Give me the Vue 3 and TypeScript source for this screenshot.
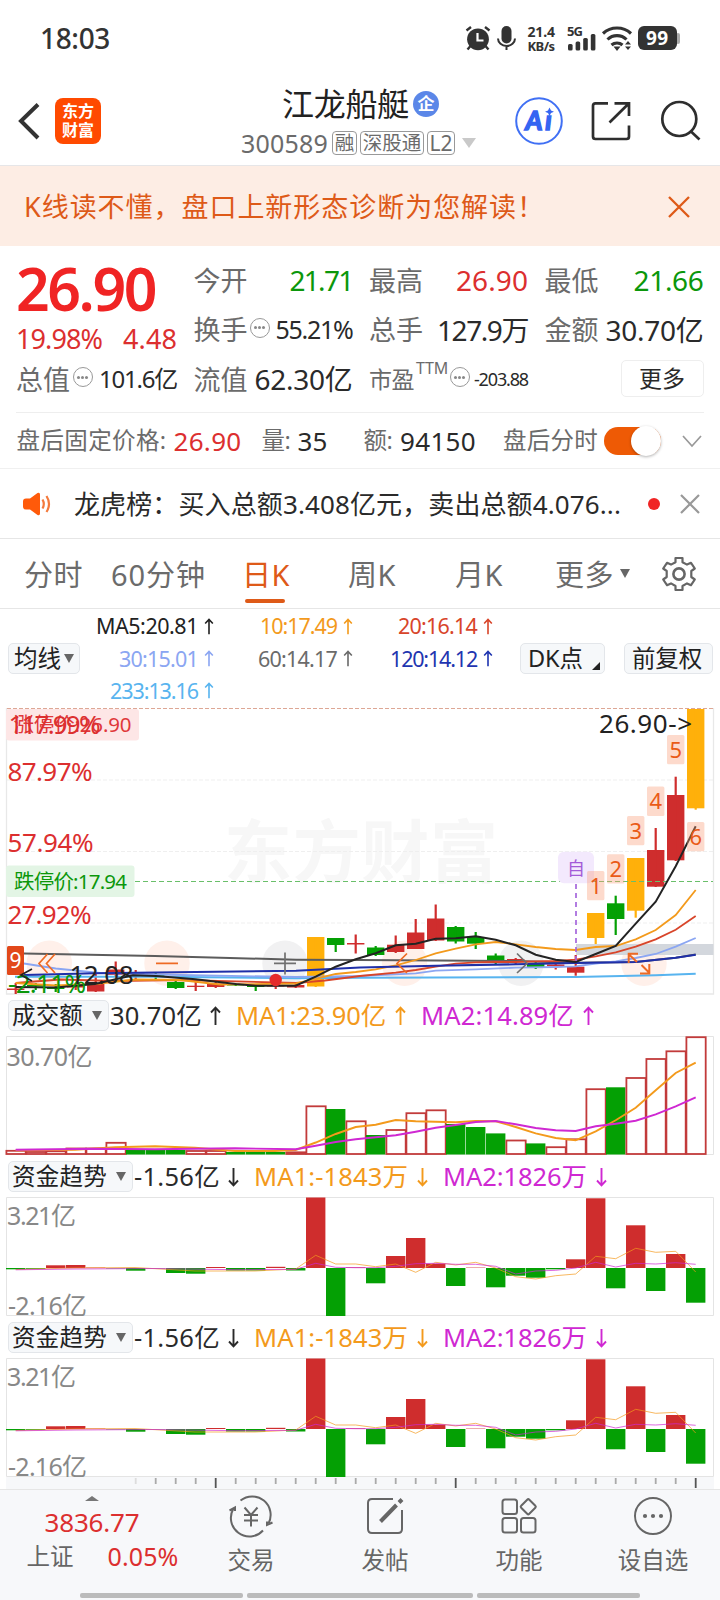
<script setup lang="ts">
import { h, type Directive, type FunctionalComponent } from 'vue'

// Spreads the glyphs of a label so that it takes exactly the given width.
const vFit: Directive<HTMLElement, number> = {
  mounted(el, { value }) {
    const n = (el.textContent ?? '').length
    const natural = el.getBoundingClientRect().width
    if (n) el.style.letterSpacing = `${((value - natural) / n).toFixed(3)}px`
  },
}

const Arrow: FunctionalComponent<{ down?: boolean }> = (p) =>
  h('svg', { class: 'arrow', width: 11, height: 20, viewBox: '0 0 11 20' }, [
    h('path', {
      d: p.down ? 'M5.5 1V18M1 13.5 5.5 18.3 10 13.5' : 'M5.5 19V2M1 6.5 5.5 1.7 10 6.5',
      fill: 'none', stroke: 'currentColor', 'stroke-width': 1.9,
    }),
  ])
Arrow.props = { down: Boolean }

const X0 = 15.7
const STEP = 20
const cx = (i: number) => X0 + STEP * i

type Kind = 'r' | 'g' | 'y'
// index, colour, body top, body bottom, wick top, wick bottom
type Candle = [number, Kind, number, number, number, number]
const candles: Candle[] = [
  [0, 'r', 988.5, 990, 983, 994], [1, 'g', 985, 986.5, 983, 990], [2, 'g', 987, 989, 984, 992], [3, 'r', 986, 987.5, 983, 990],
  [4, 'r', 984, 991.5, 973, 992], [5, 'r', 969.5, 975, 961.5, 977], [6, 'r', 973, 975, 970, 980], [7, 'g', 975, 977, 973, 979],
  [8, 'g', 982, 988, 981, 989], [9, 'r', 985.7, 987, 982, 991], [10, 'r', 983.5, 987, 982, 988], [11, 'g', 984, 985.5, 983, 986],
  [12, 'g', 985.5, 987, 985, 991], [13, 'r', 985, 986.5, 980, 989], [14, 'r', 985, 987.5, 984, 988], [15, 'y', 937, 986.5, 937, 987],
  [16, 'g', 938, 945, 938, 952], [17, 'r', 943, 944.5, 934.5, 953.5], [18, 'g', 947.5, 955, 946, 956], [19, 'r', 944.7, 952, 935.5, 953],
  [20, 'r', 932.5, 949, 919, 949], [21, 'r', 918.5, 940.5, 904.5, 941], [22, 'g', 927, 941.5, 926, 943.5], [23, 'g', 937, 943.7, 932, 949],
  [24, 'g', 955.5, 960.3, 953.5, 964], [25, 'r', 959, 960.5, 958, 964], [26, 'g', 963.3, 967, 961, 969], [27, 'r', 964.5, 966, 962, 969.5],
  [28, 'r', 966.7, 972.7, 955, 975.7], [29, 'y', 913, 938, 913, 944], [30, 'g', 903.3, 919, 895.7, 935], [31, 'y', 858, 910.7, 858, 917.7],
  [32, 'r', 850, 886.7, 828, 887], [33, 'r', 795, 860.3, 776.7, 861], [34, 'y', 709, 808.3, 709, 809.7],
]
const fill: Record<Kind, string> = { r: '#cf2d2d', g: '#04a004', y: '#ffb00a' }

// Points carry the x position in px and y in px.
const line = (pts: [number, number][]) => pts.map(([x, y]) => `${x},${y}`).join(' ')
const series = (from: number, ys: number[]): [number, number][] => ys.map((y, k) => [cx(from + k), y])

const averages = [
  { color: '#58b4ef', width: 1.9, pts: line([[15, 976.7], [155, 976.7], [296, 978.2], [360, 977.7], [575.7, 977], [655.7, 975.3], [695.7, 973.7]]) },
  { color: '#5c5c5c', width: 2, pts: line([[24, 953.5], [155, 956], [230, 958], [296, 959.7], [360, 960], [516, 961], [575.7, 962.7], [635.7, 962], [675.7, 957.7], [695.7, 954.6]]) },
  { color: '#8ba6f2', width: 1.8, pts: line([[24, 963.5], [55.7, 968.5], [100, 973], [155.7, 974.5], [296, 977], [360, 976], [415.7, 973.3], [435.7, 970.7], [475.7, 969.3], [515.7, 967.7], [555.7, 967], [575.7, 966.3], [595.7, 963.5], [615.7, 961.3], [635.7, 958], [655.7, 954], [675.7, 946.7], [695.7, 938]]) },
  { color: '#d8452a', width: 1.8, pts: line([[15.7, 983], [60, 979.5], [115, 981], [180, 980], [296, 983], [325, 980.5], [360, 976], [395.7, 972.7], [415.7, 970], [435.7, 966.7], [455.7, 963.7], [475.7, 962.3], [495.7, 962], [515.7, 962], [535.7, 961.3], [555.7, 961], [575.7, 959.7], [595.7, 956.3], [615.7, 952.3], [635.7, 946.7], [655.7, 939.3], [675.7, 929.7], [695.7, 916]]) },
  { color: '#f39a1c', width: 1.8, pts: line([[15.7, 983], [55, 985.5], [95, 984], [135, 979.5], [180, 980], [220, 984.5], [296, 983.5], [315, 979], [335.7, 974], [355.7, 972], [375.7, 969.3], [395.7, 965.3], [415.7, 960], [435.7, 953.3], [455.7, 948.7], [475.7, 944.3], [495.7, 942], [515.7, 944.3], [535.7, 947], [555.7, 949], [575.7, 950], [595.7, 947], [615.7, 946], [635.7, 939.3], [655.7, 930], [675.7, 915], [695.7, 890]]) },
  { color: '#1f2fa8', width: 2.1, pts: line([[24, 975], [95.7, 973.3], [155, 972.5], [296, 970.7], [360, 967.5], [435.7, 965.7], [515.7, 964.3], [575.7, 963], [635.7, 962], [675.7, 957.7], [695.7, 954.7]]) },
  { color: '#232323', width: 2, pts: line([[15.7, 987], [55.7, 987.5], [95, 984], [133, 975.3], [155.7, 976], [195.7, 979.3], [235.7, 984], [255.7, 985.7], [295.7, 985.7], [315.7, 976.7], [335.7, 966.7], [355.7, 959.3], [375.7, 953.3], [395.7, 945.3], [415.7, 943.7], [435.7, 938.7], [455.7, 938.3], [475.7, 936.3], [495.7, 939.7], [515.7, 945.3], [535.7, 954.7], [555.7, 959.7], [575.7, 962], [595.7, 954], [615.7, 946], [635.7, 923.7], [655.7, 901.7], [675.7, 866.3], [695.7, 826.3]]) },
]

const streaks = [
  { i: 29, n: 1, y: 871 }, { i: 30, n: 2, y: 854.2 }, { i: 31, n: 3, y: 816 },
  { i: 32, n: 4, y: 786.6 }, { i: 33, n: 5, y: 735 }, { i: 34, n: 6, y: 822 },
]
const scale = [
  { t: '117.99%', x: 8.5, y: 734, w: 92 }, { t: '87.97%', x: 7.5, y: 780.7, w: 85 },
  { t: '57.94%', x: 7.5, y: 852.3, w: 86 }, { t: '27.92%', x: 7.5, y: 923.7, w: 84 },
]

const volumeKinds = 'rrrrrrgggrrgggrrgrgrrrgggrgrrrgrrrr'
const volumeTops = [1150.8, 1152, 1151.3, 1148.5, 1148.5, 1142.8, 1150, 1150, 1150, 1151, 1151, 1152, 1152, 1152, 1152.3, 1106.3, 1109, 1121.3, 1135, 1130, 1113.2, 1110.3, 1124, 1127, 1133.4, 1140.5, 1143.4, 1147.2, 1139.3, 1089.2, 1087.3, 1078, 1059, 1051.3, 1037.2]
const volumeBars = volumeTops.map((y, i) => ({ i, y, up: volumeKinds[i] === 'r' }))
const volumeMa1 = line([[15.7, 1150.3], [75, 1149.7], [115, 1147.3], [155, 1146.3], [195, 1147.7], [235, 1151], [275, 1151], ...series(14, [1150, 1142.5, 1134, 1127, 1124.7, 1120, 1121.3, 1121.8, 1122.3, 1121, 1121.3, 1127, 1133.3, 1138, 1140.3, 1131.3, 1120.3, 1107.7, 1090.3, 1073, 1062.7])])
const volumeMa2 = line([[15.7, 1149.7], [95, 1148.7], [155, 1149.3], [235, 1148.3], ...series(14, [1149.3, 1145.7, 1142, 1139.3, 1137.3, 1135.3, 1131.7, 1127.7, 1125, 1122, 1121, 1124.3, 1128, 1130.3, 1131, 1126.3, 1123.7, 1120.7, 1114.3, 1106.3, 1097.3])])

// Height above zero in px; negative bars hang below.
const flows = [-1.3, -0.8, 2.7, 3, 0.4, -0.4, -2.7, -0.4, -5, -5.7, 1, -2.5, -2.5, 1.2, -2.5, 70.5, -48, 0.6, -15.3, 12, 30, 4.3, -18, 0.4, -19.3, -7.7, -9.7, -1.3, 8.7, 69.7, -20.3, 42.7, -23, 14, -34.7]
const flowMa1 = line([[15.7, 1269.5], [75, 1268], [135, 1267.5], [195, 1271], [255, 1271], ...series(14, [1269, 1255.3, 1264, 1264, 1266.7, 1264, 1272.3, 1262.3, 1265, 1262.3, 1268, 1276.7, 1279, 1275.7, 1274, 1256.3, 1258.7, 1248.3, 1252.3, 1251.3, 1272])])
const flowMa2 = line([[15.7, 1269.8], [75, 1269], [155, 1268.5], [235, 1269.7], ...series(14, [1269.3, 1263.3, 1267.3, 1267.7, 1267.7, 1266.3, 1263.7, 1263.3, 1264.3, 1264.3, 1266.3, 1274, 1271, 1270.3, 1268, 1262.3, 1267, 1263.3, 1264, 1262.7, 1264.3])])
const ticks = Array.from({ length: 29 }, (_, k) => k + 6)

const maCols = [
  [{ t: 'MA5:20.81', c: '#222222', w: 102 }, { t: '30:15.01', c: '#8ba6f2', w: 79 }, { t: '233:13.16', c: '#58b4ef', w: 88 }],
  [{ t: '10:17.49', c: '#f39a1c', w: 77 }, { t: '60:14.17', c: '#6b6b6b', w: 79 }],
  [{ t: '20:16.14', c: '#d8452a', w: 79 }, { t: '120:14.12', c: '#1f35b0', w: 87 }],
]
const nav = ['交易', '发帖', '功能', '设自选']
</script>

<template>
  <div class="page">
    <div class="status">
      <span v-fit="70" class="clock">18:03</span>
      <svg class="status-icons" width="226" height="36" viewBox="460 20 226 36">
        <g fill="#333">
          <circle cx="478" cy="39.3" r="10.9" />
          <path d="M466.500 30.500 471 27M489.500 30.500 485 27M470.500 46 467.500 49.500M485.500 46 488.500 49.500" stroke="#333" stroke-width="2.4" />
          <path d="M477.500 33V40.500H483.500" fill="none" stroke="#fff" stroke-width="2.2" />
          <rect x="501.500" y="26" width="10" height="17.500" rx="5" />
          <path d="M498 38.500a8.500 7.500 0 0 0 17 0M506.500 46V50" fill="none" stroke="#333" stroke-width="2" />
          <rect x="568" y="44" width="4.600" height="6.500" rx="1.500" /><rect x="575.600" y="41.500" width="4.600" height="9" rx="1.500" />
          <rect x="583.200" y="38" width="4.600" height="12.500" rx="1.500" /><rect x="590.800" y="34" width="4.600" height="16.500" rx="1.500" />
        </g>
        <g fill="none" stroke="#333" stroke-width="3.100">
          <path d="M603 33.500a20.500 20.500 0 0 1 28 0M607.500 39.500a13.500 13.500 0 0 1 19 0" />
          <path d="M611.500 45a8.500 8.500 0 0 1 11 0" />
        </g>
        <path d="M613.500 46.500h7L617 51zM625 44.500 628 41 631 44.500zM625 46.500h6L628 50z" fill="#333" />
        <rect x="676" y="33" width="4" height="11" rx="2" fill="#aaa" />
        <rect x="638" y="26" width="39" height="24" rx="6" fill="#333" />
        <g font-weight="700" fill="#333" font-size="14">
          <text x="527.500" y="37.300" textLength="27.500">21.4</text><text x="527.500" y="51" font-size="13" textLength="27.500">KB/s</text>
          <text x="567" y="36.300" font-size="13" textLength="16">5G</text>
          <text x="646" y="44.700" fill="#fff" font-size="19" textLength="22">99</text>
        </g>
      </svg>
    </div>

    <header class="head">
      <svg class="back" width="24" height="40" viewBox="0 0 24 40"><path d="M21 3.500 4 20 21 37" fill="none" stroke="#333" stroke-width="4" /></svg>
      <div class="logo"><span>东方</span><span>财富</span></div>
      <div class="title">
        <div class="name"><span v-fit="127">江龙船艇</span><i class="corp">企</i></div>
        <div class="code">
          <span v-fit="87">300589</span>
          <b class="tag t1">融</b><b class="tag t2">深股通</b><b class="tag t3">L2</b>
          <svg width="14" height="10" viewBox="0 0 14 10"><path d="M0 0H14L7 10z" fill="#c9c9c9" /></svg>
        </div>
      </div>
      <svg class="tools" width="192" height="52" viewBox="514 95 192 52">
        <circle cx="539" cy="121" r="22.800" fill="#fff" stroke="#4070f4" stroke-width="2" />
        <text x="525.500" y="129.500" fill="#3565f2" stroke="#3565f2" stroke-width="1.600" font-family="Lato" font-size="26" font-weight="700" font-style="italic" textLength="26">Aı</text>
        <path d="M549.500 107.500 551 110.500 554 111.800 551 113 549.500 116 548 113 545 111.800 548 110.500z" fill="#3565f2" />
        <g fill="none" stroke="#2e2e2e" stroke-width="2.700">
          <path d="M608 103.300H595.500a2.500 2.500 0 0 0-2.500 2.500V136.500a2.500 2.500 0 0 0 2.500 2.500H626.500a2.500 2.500 0 0 0 2.500-2.500V125.500M614.500 103.300H629V116M628.500 103.800 609.500 122.500" />
          <circle cx="679.300" cy="119" r="17" /><path d="M691 131.500 699.500 139.500" />
        </g>
      </svg>
    </header>

    <div class="banner">
      <span v-fit="521">K线读不懂，盘口上新形态诊断为您解读！</span>
      <svg width="24" height="24" viewBox="0 0 24 24"><path d="M2 2 22 22M22 2 2 22" stroke="#de5a18" stroke-width="2.300" /></svg>
    </div>

    <section class="quote">
      <div class="col c1">
        <div class="price"><span v-fit="139">26.90</span></div>
        <div class="chg red"><span v-fit="86">19.98%</span><span v-fit="54">4.48</span></div>
        <div class="cell"><label v-fit="54">总值</label><i class="dots" /><span v-fit="78" class="s24">101.6亿</span></div>
      </div>
      <div class="col">
        <div class="cell"><label v-fit="54">今开</label><span v-fit="63" class="green">21.71</span></div>
        <div class="cell"><label v-fit="54">换手</label><i class="dots" /><span v-fit="77" class="s25">55.21%</span></div>
        <div class="cell"><label v-fit="54">流值</label><span v-fit="98">62.30亿</span></div>
      </div>
      <div class="col">
        <div class="cell"><label v-fit="54">最高</label><span v-fit="72" class="red">26.90</span></div>
        <div class="cell"><label v-fit="54">总手</label><span v-fit="91">127.9万</span></div>
        <div class="cell pe"><label v-fit="45">市盈</label><sup v-fit="32">TTM</sup><i class="dots" /><span v-fit="54" class="s18">-203.88</span></div>
      </div>
      <div class="col">
        <div class="cell"><label v-fit="54">最低</label><span v-fit="70" class="green">21.66</span></div>
        <div class="cell"><label v-fit="54">金额</label><span v-fit="98">30.70亿</span></div>
        <div class="cell end"><button class="more">更多</button></div>
      </div>
    </section>

    <div class="after">
      <span v-fit="150" class="k">盘后固定价格:</span><span v-fit="68" class="v red m1">26.90</span>
      <span v-fit="29" class="k m2">量:</span><span v-fit="30" class="v m3">35</span>
      <span v-fit="29" class="k m4">额:</span><span v-fit="76" class="v m5">94150</span>
      <span v-fit="95" class="k m6">盘后分时</span>
      <i class="toggle" />
      <svg width="20" height="13" viewBox="0 0 20 13"><path d="M1 1 10 11 19 1" fill="none" stroke="#999" stroke-width="1.700" /></svg>
    </div>

    <div class="news">
      <svg width="30" height="26" viewBox="0 0 30 26">
        <path d="M4 7.500H8L15.500 2q2.500-1 2.500 1.500V22.500q0 2.500-2.500 1.500L8 18.500H4Q1 18.500 1 15.500V10.500Q1 7.500 4 7.500z" fill="#ff5a0a" />
        <path d="M20.500 8.500q2.600 4.500 0 9M24.500 5q5 8 0 16" fill="none" stroke="#f47a3c" stroke-width="2.200" />
      </svg>
      <span v-fit="547" class="msg">龙虎榜：买入总额3.408亿元，卖出总额4.076...</span>
      <i class="dot" />
      <svg width="20" height="20" viewBox="0 0 20 20"><path d="M1 1 19 19M19 1 1 19" stroke="#999" stroke-width="2.200" /></svg>
    </div>

    <nav class="tabs">
      <span v-fit="59" class="p1">分时</span><span v-fit="95" class="p2">60分钟</span><span v-fit="48" class="p3 on">日K</span>
      <span v-fit="48" class="p4">周K</span><span v-fit="48" class="p5">月K</span><span v-fit="59" class="p6">更多</span>
      <svg class="tri" width="10" height="9" viewBox="0 0 10 9"><path d="M0 0H10L5 9z" fill="#666" /></svg>
      <svg class="gear" width="36" height="36" viewBox="0 0 36 36" fill="none" stroke="#666" stroke-width="2.200" stroke-linejoin="round">
        <path d="M14.500 2H21.500V6.200L26 8.600 30 6.800 33.800 12.500 30.300 15V21L33.800 23.500 30 29.200 26 27.400 21.500 30V34H14.500V30L10 27.400 6 29.200 2.200 23.500 5.700 21V15L2.200 12.500 6 6.800 10 8.600 14.500 6.200z" /><circle cx="18" cy="18" r="5.600" stroke-width="2.600" />
      </svg>
    </nav>

    <div class="mas">
      <button class="chip b1"><span v-fit="47">均线</span><svg width="10" height="9" viewBox="0 0 10 9"><path d="M0 0H10L5 9z" fill="#666" /></svg></button>
      <div class="magrid">
        <div v-for="(col, c) in maCols" :key="c" class="macol">
          <div v-for="m in col" :key="m.t" class="ma" :style="{ color: m.c }"><span v-fit="m.w">{{ m.t }}</span><Arrow class="sm" /></div>
        </div>
      </div>
      <button class="chip b2"><span v-fit="55">DK点</span><svg class="corner" width="8" height="8" viewBox="0 0 8 8"><path d="M8 0V8H0z" fill="#222" /></svg></button>
      <button class="chip b3"><span v-fit="70">前复权</span></button>
    </div>

    <svg class="chart" width="720" height="287" viewBox="0 708 720 287">
      <g font-family="'Noto Sans CJK SC'" font-weight="700" font-size="68" fill="#f7f7f7"><text x="224" y="877" textLength="274">东方财富</text></g>
      <path d="M7 780H713M7 851.500H713M7 923H713" fill="none" stroke="#efefef" stroke-dasharray="4 2" />
      <path d="M6.500 708V994H713.500V708" fill="none" stroke="#e8e8e8" stroke-width="1.300" />
      <path d="M7 708.500H713" stroke="#dda795" stroke-dasharray="4 2" />
      <g fill="#fff0ea"><circle cx="49.300" cy="963.300" r="22.700" /><circle cx="167" cy="963.300" r="22.700" /><circle cx="404.500" cy="963.300" r="22.700" /><circle cx="644" cy="963.300" r="22.700" /></g>
      <g fill="#f1f1f2"><circle cx="285" cy="963.300" r="22.700" /><circle cx="521" cy="963.300" r="22.700" /></g>
      <rect x="576" y="944" width="137.500" height="11" fill="#d3d7dd" />
      <g v-for="[i, k, t, b, wt, wb] in candles" :key="i" :fill="fill[k]">
        <rect :x="cx(i) - 8.7" :y="t" width="17.400" :height="b - t" />
        <rect :x="cx(i) - 1.1" :y="wt" width="2.200" :height="wb - wt" />
      </g>
      <rect x="6" y="709" width="133" height="31.500" rx="3" fill="#fde6e6" />
      <text x="13.500" y="732" fill="#e0383a" font-size="20.500" textLength="118">涨停价:26.90</text>
      <path d="M135 881.500H713" stroke="#6abf6a" stroke-width="1.100" stroke-dasharray="5 3" />
      <rect x="6" y="865.500" width="128.500" height="31.500" rx="3" fill="#e3f5e5" />
      <text x="14" y="889" fill="#0b970b" font-size="20.500" textLength="113">跌停价:17.94</text>
      <g fill="#dc2f2f" font-size="26"><text v-for="s in scale" :key="s.t" :x="s.x" :y="s.y" :textLength="s.w">{{ s.t }}</text></g>
      <polyline v-for="a in averages" :key="a.color" :points="a.pts" fill="none" :stroke="a.color" :stroke-width="a.width" />
      <text x="8" y="993.300" fill="#0b970b" font-size="26" textLength="78">-2.11%</text>
      <g fill="none" stroke="#ee6a24" stroke-width="1.700">
        <path d="M47.500 954 39 963.500 47.500 973M55 954 46.500 963.500 55 973M156 963.300H178M407 953.500 397 963.500 407 973" />
        <path d="M628.700 963V953.700H638M629 954.500 637 962M641.500 965 649.500 973M649.300 964V973.500H640" stroke-width="2" />
      </g>
      <path d="M274 963.300H296M285 952.500V974.500M517 953.500 527 963.500 517 973" fill="none" stroke="#707070" stroke-width="1.700" />
      <circle cx="275.700" cy="980" r="6.200" fill="#e52b2b" />
      <rect x="7" y="946" width="17" height="29" rx="1.500" fill="#e2481a" />
      <text x="9.500" y="967.500" fill="#fff" font-size="21">9</text>
      <path d="M32 969 21 975 32 981" fill="none" stroke="#222" stroke-width="1.700" />
      <text x="69.500" y="983.500" fill="#222" font-size="26" textLength="64">12.08</text>
      <path d="M576 884V962" stroke="#a566dc" stroke-width="1.700" stroke-dasharray="5 4" />
      <rect x="558" y="851.700" width="36" height="31.500" rx="6" fill="#f3e9fd" />
      <text x="576" y="874.500" fill="#a35bd8" font-size="18" text-anchor="middle">自</text>
      <g v-for="s in streaks" :key="s.i" text-anchor="middle">
        <rect :x="cx(s.i) - 8.7" :y="s.y" width="17.400" height="29.300" rx="1.500" fill="#fb9e78" fill-opacity=".38" />
        <text :x="cx(s.i)" :y="s.y + 22.500" fill="#ea5a17" font-size="22">{{ s.n }}</text>
      </g>
      <text x="599" y="733.300" fill="#222" font-size="26" textLength="93">26.90-&gt;</text>
    </svg>

    <div class="ind">
      <button class="chip"><span v-fit="71">成交额</span><svg width="10" height="9" viewBox="0 0 10 9"><path d="M0 0H10L5 9z" fill="#666" /></svg></button>
      <span v-fit="92">30.70亿</span><Arrow class="a1" />
      <span v-fit="150" class="or">MA1:23.90亿</span><Arrow class="or a2" />
      <span v-fit="153" class="pu">MA2:14.89亿</span><Arrow class="pu a3" />
    </div>
    <svg class="chart" width="720" height="119" viewBox="0 1036 720 119">
      <path d="M6.500 1154.500V1036.500H713.500V1154.500z" fill="#fff" stroke="#e4e4e4" />
      <g v-for="b in volumeBars" :key="b.i">
        <rect v-if="b.up" :x="cx(b.i) - 9.300" :y="b.y" width="19.300" :height="1154 - b.y" fill="#fff" stroke="#c23b3b" stroke-width="1.800" />
        <rect v-else :x="cx(b.i) - 9.700" :y="b.y" width="19.400" :height="1154.500 - b.y" fill="#04a004" />
      </g>
      <polyline :points="volumeMa1" fill="none" stroke="#f39a1c" stroke-width="1.900" />
      <polyline :points="volumeMa2" fill="none" stroke="#cf28d2" stroke-width="1.900" />
      <text x="6.500" y="1066" fill="#888" font-size="25" textLength="86">30.70亿</text>
    </svg>

    <template v-for="p in 2" :key="p">
      <div class="ind flow">
        <button class="chip"><span v-fit="95">资金趋势</span><svg width="10" height="9" viewBox="0 0 10 9"><path d="M0 0H10L5 9z" fill="#666" /></svg></button>
        <span v-fit="86">-1.56亿</span><Arrow down class="f1" />
        <span v-fit="154" class="or">MA1:-1843万</span><Arrow down class="or f2" />
        <span v-fit="144" class="pu">MA2:1826万</span><Arrow down class="pu f3" />
      </div>
      <svg class="chart" width="720" height="119" viewBox="0 1197 720 119">
        <path d="M6.500 1315.500V1197.500H713.500V1315.500z" fill="#fff" stroke="#e4e4e4" />
        <rect v-for="(f, i) in flows" :key="i" :x="cx(i) - 9.700" :y="f > 0 ? 1268 - f : 1268" width="19.400" :height="Math.abs(f)" :fill="f > 0 ? '#cf2d2d' : '#04a004'" />
        <polyline :points="flowMa1" fill="none" stroke="#f39a1c" stroke-width=".7" />
        <polyline :points="flowMa2" fill="none" stroke="#cf28d2" stroke-width=".7" />
        <text x="7" y="1224.700" fill="#888" font-size="25" textLength="69">3.21亿</text>
        <text x="8" y="1315" fill="#888" font-size="25" textLength="79">-2.16亿</text>
      </svg>
    </template>
    <svg class="chart" width="720" height="12" viewBox="0 1477 720 12">
      <rect x="6" y="1477" width="708" height="12" fill="#f7f8fa" />
      <rect v-for="i in ticks" :key="i" :x="cx(i) - 0.900" y="1478" :width="1.800" :height="i % 12 === 10 ? 10 : 6" :fill="i % 12 === 10 ? '#555' : i === 6 ? '#ddd' : '#aaa'" />
    </svg>

    <footer class="bottom">
      <div class="index">
        <svg width="14" height="5" viewBox="0 0 14 5"><path d="M7 0 14 5H0z" fill="#777" /></svg>
        <span v-fit="95" class="red i1">3836.77</span>
        <div class="i2"><span v-fit="47">上证</span><span v-fit="71" class="red s25">0.05%</span></div>
      </div>
      <div v-for="(n, i) in nav" :key="n" class="item">
        <svg width="44" height="44" viewBox="-22 -22 44 44" fill="none" stroke="#666" stroke-width="2">
          <g v-if="i === 0">
            <path d="M-10.500-15.500A18.500 18.500 0 0 1 17.500 7.500M16 5.500V9L21.500 6.500M12 14.500A18.500 18.500 0 0 1-17.500-7.500M-21.500-5.500-16-8.500V-5" />
            <path d="M-6.500-8.500 0-1 6.500-8.500M-7-1H7M-7 4.500H7M0-1V10.500" />
          </g>
          <g v-else-if="i === 1"><path d="M8-17H-13Q-17-17-17-13V13Q-17 17-13 17H13Q17 17 17 13V-6" /><path d="M-4.500 5.500 11.500-11M14-13.500 17-16.500" stroke-width="4" /></g>
          <g v-else-if="i === 2">
            <rect x="-16.500" y="-16.500" width="14.500" height="14.500" rx="2.500" /><rect x="-16.500" y="2" width="14.500" height="14.500" rx="2.500" /><rect x="2" y="2" width="14.500" height="14.500" rx="2.500" />
            <rect x="3.500" y="-15" width="11.500" height="11.500" rx="1.500" transform="rotate(45 9.250 -9.250)" />
          </g>
          <g v-else><circle r="18" /><g fill="#666" stroke="none"><circle cx="-8" r="2.100" /><circle r="2.100" /><circle cx="8" r="2.100" /></g></g>
        </svg>
        <span v-fit="n.length * 23.500">{{ n }}</span>
      </div>
      <div class="home"><i /><i class="wide" /><i /></div>
    </footer>
  </div>
</template>

<style>
body { margin: 0; background: #fff; }
</style>

<style scoped>
.page { width: 720px; height: 1600px; overflow: hidden; background: #fff; color: #2a2a2a; font-family: "Noto Sans", "Noto Sans CJK SC", sans-serif; line-height: 1; }
.page * { box-sizing: border-box; }
span, label, sup { white-space: nowrap; flex: none; display: inline-block; }
i, b { font-style: normal; }
svg { display: block; flex: none; }
button { border: 0; padding: 0; font: inherit; color: inherit; }
.red { color: #dc2f2f; }
.green { color: #0b970b; }

.status { height: 76px; display: flex; padding: 20px 34px 0 40px; justify-content: space-between; }
.clock { font-size: 28px; font-weight: 500; line-height: 37px; color: #333; }

.head { height: 89px; display: flex; align-items: flex-start; padding: 0 14px 0 17px; }
.back { margin-top: 25px; }
.logo { margin: 22px 0 0 14px; width: 46px; height: 46px; border-radius: 8px; background: #ff4a00; color: #fff; font: 700 16px/19px "Noto Sans CJK SC"; display: flex; flex-direction: column; align-items: center; justify-content: center; padding-bottom: 2px; }
.title { margin: 9px 0 0 140px; width: 273px; }
.name { display: flex; align-items: center; height: 38px; padding-left: 41px; font-size: 32px; color: #222; }
.corp { width: 26px; height: 26px; margin-left: 4px; border-radius: 50%; background: #5b87e8; color: #fff; font-size: 17px; font-weight: 700; line-height: 25px; text-align: center; }
.code { display: flex; align-items: center; height: 40px; font-size: 25px; color: #6b6b6b; }
.tag { height: 24px; margin-right: 3px; border: 1px solid #999; border-radius: 4px; font-size: 19.500px; font-weight: 400; line-height: 22px; text-align: center; }
.t1 { width: 25px; margin-left: 4px; }
.t2 { width: 64px; }
.t3 { width: 28px; font-size: 21px; margin-right: 7px; }
.tools { margin-top: 19px; }

.banner { height: 81px; border-top: 1px solid #e6e6e8; background: #fdede4; color: #de5a18; font-size: 27px; display: flex; align-items: center; justify-content: space-between; padding: 1px 29px 0 24px; }

.quote { height: 166px; display: grid; grid-template-columns: 161px 159px 159px 159px; column-gap: 16.500px; padding: 9.500px 15px 0 16px; }
.col { display: flex; flex-direction: column; }
.cell { height: 49.500px; display: flex; align-items: center; justify-content: space-between; font-size: 28px; }
.cell label { font-size: 27px; color: #6b6b6b; }
.price { height: 61px; font-size: 59px; font-weight: 600; color: #f02424; line-height: 64px; }
.chg { height: 38px; display: flex; align-items: center; justify-content: space-between; font-size: 27px; padding: 5px 0 0; }
.cell .s24 { font-size: 24px; }
.s25 { font-size: 25px; }
.cell .s18 { font-size: 18px; }
.pe label { font-size: 23px; }
.pe sup { font-size: 16px; color: #6b6b6b; align-self: flex-start; margin-top: 4px; line-height: 18px; }
.dots { width: 20px; height: 20px; border: 1.500px solid #999; border-radius: 50%; display: flex; flex: none; align-items: center; justify-content: center; margin: 0 4px 4px 0; }
.pe .dots { margin-right: 2px; }
.dots::before { content: ""; width: 3px; height: 3px; border-radius: 50%; background: #888; box-shadow: -4px 0 #888, 4px 0 #888; }
.end { justify-content: flex-end; }
.more { width: 83px; height: 37px; border: 1.500px solid #eee; border-radius: 5px; background: #fff; font-size: 23px; margin-bottom: 2px; }

.after { height: 57px; border-bottom: 1px solid #f0f0f0; display: flex; align-items: center; padding: 2px 0 0 16.500px; font-size: 23.500px; background: linear-gradient(#eee, #eee) 16px 0 / 688px 1px no-repeat; }
.after .k { color: #6b6b6b; }
.after .v { font-size: 26px; }
.m1 { margin-left: 7px; }
.m2 { margin-left: 20px; }
.m3 { margin-left: 7px; }
.m4 { margin-left: 36px; }
.m5 { margin-left: 7.500px; }
.m6 { margin-left: 27px; }
.toggle { width: 57px; height: 28px; margin: 0 21px 0 6px; border-radius: 14px; background: #ee5a05; display: flex; justify-content: flex-end; align-items: center; }
.toggle::before { content: ""; width: 30px; height: 30px; flex: none; border-radius: 50%; background: #fff; box-shadow: 0 1px 3px rgba(0, 0, 0, .3); }

.news { height: 70px; border-bottom: 1px solid #e6e6e6; display: flex; align-items: center; padding-left: 22px; font-size: 26px; }
.msg { margin-left: 22px; }
.dot { width: 12px; height: 12px; border-radius: 50%; background: #f02424; margin: 0 20px 0 27px; }

.tabs { height: 70px; border-bottom: 1px solid #e6e6e6; display: flex; align-items: center; font-size: 29px; color: #6b6b6b; }
.tabs span { height: 70px; line-height: 71px; position: relative; }
.p1 { margin-left: 24px; }
.p2 { margin-left: 28px; }
.p3 { margin-left: 36px; }
.p4 { margin-left: 58px; }
.p5 { margin-left: 59px; }
.p6 { margin-left: 52px; }
.tabs .on { color: #de5a18; }
.on::after { content: ""; position: absolute; left: 3px; bottom: 6px; width: 40px; height: 4px; border-radius: 2px; background: #de5a18; }
.tri { margin-left: 6px; }
.gear { margin-left: 31px; }

.mas { height: 99px; display: flex; align-items: center; padding-left: 8px; }
.chip { height: 31px; background: #f6f8fa; border: 1px solid #e3e6ea; border-radius: 5px; display: flex; align-items: center; font-size: 23.500px; flex: none; color: #222; }
.b1 { width: 72px; padding-left: 5px; gap: 3px; }
.b2 { width: 85px; padding-left: 7px; margin-left: 27px; gap: 9px; }
.corner { margin-top: 15px; }
.b3 { width: 89px; padding-left: 7px; margin-left: 19px; }
.magrid { display: grid; grid-template-columns: 134px 139px 140px; height: 97px; }
.macol { display: flex; flex-direction: column; }
.ma { height: 32.300px; display: flex; align-items: center; justify-content: flex-end; gap: 6px; font-size: 21.500px; }
.sm { width: 10px; height: 17px; }

.chart { width: 720px; }
.ind { height: 41px; display: flex; align-items: center; padding-left: 8px; font-size: 25.500px; }
.ind .chip { width: 101px; padding-left: 3px; gap: 9px; margin-right: 1px; font-size: 23.500px; }
.flow { height: 42px; padding-top: 1px; }
.flow .chip { width: 125px; margin-right: 1px; }
.or { color: #f39a1c; }
.pu { color: #cf28d2; }
.a1 { margin: 0 15px 0 8px; }
.a2 { margin: 0 15px 0 9px; }
.a3, .f3 { margin-left: 9px; }
.f1 { margin: 0 15px 0 8px; }
.f2 { margin: 0 15px 0 9px; }

.bottom { height: 111px; background: #f7f8fa; border-top: 1px solid #e6e6e6; display: grid; grid-template-columns: 184px repeat(4, 134px); grid-template-rows: 102px 8px; color: #666; font-size: 23.500px; }
.index { display: flex; flex-direction: column; align-items: center; padding-top: 6px; }
.i1 { font-size: 26px; margin-top: 8px; }
.i2 { display: flex; align-items: center; justify-content: space-between; width: 152px; margin: 8px 0 0 21px; height: 27px; }
.item { display: flex; flex-direction: column; align-items: center; padding-top: 4px; gap: 11px; }
.home { grid-column: 1 / -1; display: flex; justify-content: center; gap: 4px; padding-top: 1px; }
.home i { width: 163px; height: 5px; border-radius: 2px; background: #bbb; }
.home .wide { width: 226px; }
</style>
